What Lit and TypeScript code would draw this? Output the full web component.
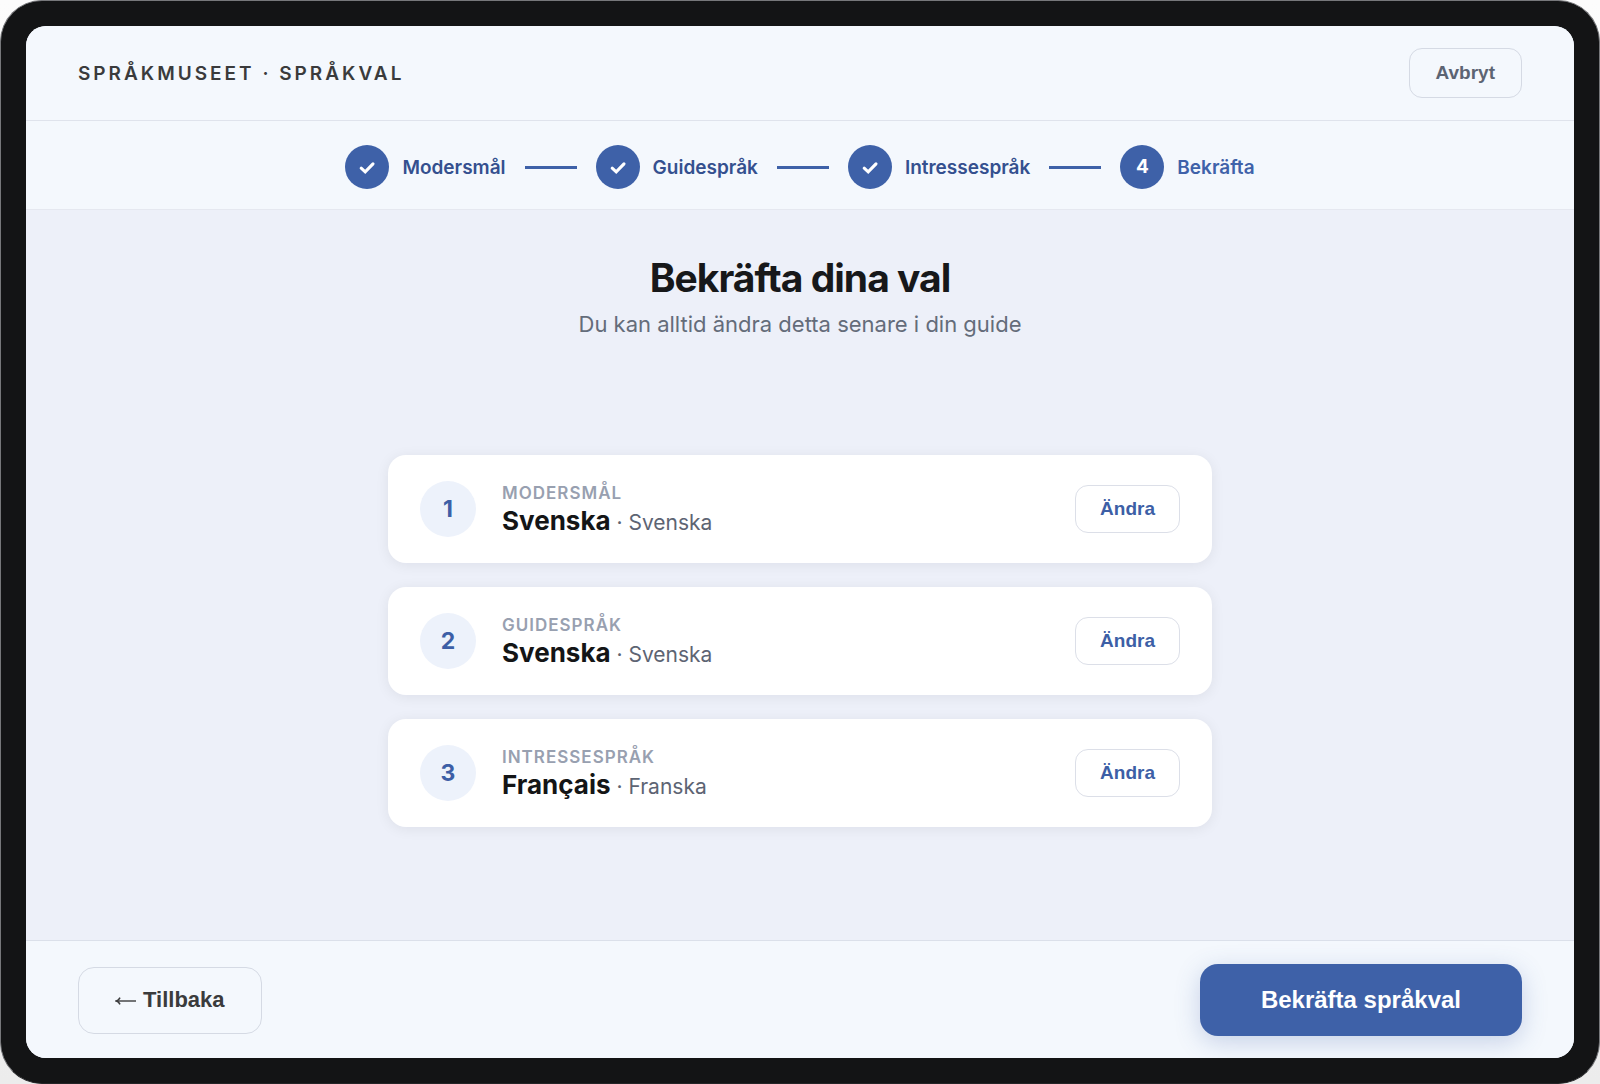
import { LitElement, html, css } from "lit";
import { customElement, property, state } from "lit/decorators.js";

interface Choice {
  label: string;
  native: string;
  swedish: string;
}

@customElement("step-indicator")
export class StepIndicator extends LitElement {
  @property({ attribute: false }) steps: string[] = [];
  @property({ type: Number }) current = 0;

  static styles = css`
    :host {
      display: block;
    }
    .steps {
      display: flex;
      justify-content: center;
      align-items: center;
      margin: 0;
      padding: 0;
      list-style: none;
    }
    .step {
      display: flex;
      align-items: center;
      gap: 13px;
      font-size: 19px;
      line-height: 24px;
      font-weight: 600;
      color: #34508f;
    }
    .step.current {
      color: #3f62a9;
    }
    .step + .step::before {
      content: "";
      width: 52px;
      height: 3px;
      margin: 0 6px;
      background: #3e61a8;
    }
    .step + .step {
      margin-left: 13px;
    }
    .dot {
      display: grid;
      place-items: center;
      width: 44px;
      height: 44px;
      border-radius: 50%;
      background: #3e61a8;
      color: #fff;
      font-weight: 700;
    }
    .name {
      padding-top: 2px;
    }
    .check {
      display: block;
      width: 18px;
      height: 18px;
    }
  `;

  render() {
    return html`<ol class="steps">
      ${this.steps.map(
        (name, i) => html`<li class="step ${i === this.current ? "current" : ""}">
          <span class="dot">
            ${i < this.current
              ? html`<svg class="check" viewBox="0 0 18 18" fill="none" aria-hidden="true">
                  <path d="M3.2 10.2 7.2 13.8 15 5.8" stroke="#fff" stroke-width="3.1"
                    stroke-linecap="round" stroke-linejoin="miter" />
                </svg>`
              : i + 1}
          </span>
          <span class="name">${name}</span>
        </li>`,
      )}
    </ol>`;
  }
}

@customElement("choice-card")
export class ChoiceCard extends LitElement {
  @property({ type: Number }) number = 1;
  @property({ attribute: false }) choice!: Choice;

  static styles = css`
    :host {
      display: block;
    }
    .card {
      display: flex;
      align-items: center;
      gap: 26px;
      padding: 26px 32px;
      border-radius: 18px;
      background: #fff;
      box-shadow: 0 2px 14px rgba(20, 20, 30, 0.07);
    }
    .number {
      display: grid;
      place-items: center;
      flex: none;
      width: 56px;
      height: 56px;
      border-radius: 50%;
      background: #edf2fb;
      color: #3d5fa6;
      font-size: 23px;
      line-height: 28px;
      font-weight: 700;
    }
    .text {
      flex: 1;
      min-width: 0;
    }
    .label {
      margin: 0;
      font-size: 17px;
      line-height: 24px;
      font-weight: 600;
      letter-spacing: 1px;
      text-transform: uppercase;
      color: #98a0b0;
    }
    .value {
      margin: 0;
      font-size: 26px;
      line-height: 32px;
      font-weight: 700;
      color: #141516;
    }
    .translation {
      font-size: 21px;
      line-height: 24px;
      font-weight: 400;
      color: #5d6473;
    }
    .change {
      flex: none;
      height: 48px;
      padding: 0 24px;
      border: 1px solid #dcdfe8;
      border-radius: 13px;
      background: #fff;
      color: #3d5fa6;
      font: 600 19px/24px "Liberation Sans", Arial, sans-serif;
      cursor: pointer;
    }
  `;

  render() {
    const { label, native, swedish } = this.choice;
    return html`<article class="card">
      <span class="number">${this.number}</span>
      <div class="text">
        <p class="label">${label}</p>
        <p class="value">${native}<span class="translation"> · ${swedish}</span></p>
      </div>
      <button class="change" type="button">Ändra</button>
    </article>`;
  }
}

@customElement("app-root")
export class AppRoot extends LitElement {
  @state() private steps = ["Modersmål", "Guidespråk", "Intressespråk", "Bekräfta"];
  @state() private choices: Choice[] = [
    { label: "Modersmål", native: "Svenska", swedish: "Svenska" },
    { label: "Guidespråk", native: "Svenska", swedish: "Svenska" },
    { label: "Intressespråk", native: "Français", swedish: "Franska" },
  ];

  static styles = css`
    :host {
      display: block;
      box-sizing: border-box;
      font-family: Inter, "Liberation Sans", sans-serif;
      background: linear-gradient(#fcfcfc, #ececec);
    }
    .device {
      box-sizing: border-box;
      display: flex;
      min-height: 100vh;
      padding: 25px;
      border: 1px solid #76777a;
      border-bottom-color: #242527;
      border-radius: 42px;
      background: #131415;
    }
    .screen {
      flex: 1;
      display: flex;
      flex-direction: column;
      overflow: hidden;
      border-radius: 20px;
      background: #edf0f9;
    }
    .topbar,
    .footer {
      display: flex;
      justify-content: space-between;
      align-items: center;
      background: #f4f8fd;
    }
    .topbar {
      padding: 22px 52px;
      border-bottom: 1px solid #dfe3ec;
    }
    .brand {
      padding-top: 2px;
      font-size: 19px;
      line-height: 24px;
      font-weight: 600;
      letter-spacing: 3px;
      text-transform: uppercase;
      color: #3a3b3c;
    }
    .progress {
      padding: 24px 52px 20px;
      border-bottom: 1px solid #e5e8f0;
      background: #f4f8fd;
    }
    .content {
      flex: 1;
      display: flex;
      flex-direction: column;
      padding: 44px 52px 0;
    }
    .intro {
      text-align: center;
    }
    .title {
      margin: 0;
      font-size: 39px;
      line-height: 48px;
      font-weight: 700;
      letter-spacing: -1px;
      color: #17181a;
    }
    .subtitle {
      margin: 8px 0 0;
      font-size: 22px;
      line-height: 28px;
      color: #646c7a;
    }
    .choices {
      flex: 1;
      display: flex;
      flex-direction: column;
      justify-content: center;
      gap: 24px;
      width: 100%;
      max-width: 824px;
      margin: 4px auto 0;
    }
    .footer {
      padding: 23px 52px 22px;
      border-top: 1px solid #dbe0ea;
    }
    .button {
      border: 1px solid #d5dae4;
      background: transparent;
      font-family: "Liberation Sans", Arial, sans-serif;
      font-weight: 600;
      cursor: pointer;
    }
    .cancel {
      height: 50px;
      padding: 0 26px;
      border-radius: 13px;
      font-size: 19px;
      color: #5c6473;
    }
    .back {
      display: flex;
      align-items: center;
      gap: 6px;
      height: 67px;
      padding: 0 36px;
      border-radius: 16px;
      font-size: 22px;
      color: #3a3b3c;
    }
    .arrow {
      width: 22px;
      height: 12px;
      margin-top: 2px;
    }
    .confirm {
      height: 72px;
      padding: 0 61px;
      border: 0;
      border-radius: 18px;
      background: #3e61a8;
      box-shadow: 0 6px 24px rgba(62, 97, 168, 0.25);
      font-size: 24px;
      color: #fff;
    }
  `;

  render() {
    return html`<div class="device">
      <div class="screen">
        <header class="topbar">
          <span class="brand">Språkmuseet · Språkval</span>
          <button class="button cancel" type="button">Avbryt</button>
        </header>
        <nav class="progress" aria-label="Steg">
          <step-indicator .steps=${this.steps} .current=${3}></step-indicator>
        </nav>
        <main class="content">
          <div class="intro">
            <h1 class="title">Bekräfta dina val</h1>
            <p class="subtitle">Du kan alltid ändra detta senare i din guide</p>
          </div>
          <section class="choices">
            ${this.choices.map(
              (c, i) => html`<choice-card .number=${i + 1} .choice=${c}></choice-card>`,
            )}
          </section>
        </main>
        <footer class="footer">
          <button class="button back" type="button">
            <svg class="arrow" viewBox="0 0 22 12" fill="none" stroke="currentColor" aria-hidden="true">
              <path d="M1.5 6H21" stroke-width="1.4" />
              <path d="M5 2.6C4.2 4.3 3 5.5 1.4 6c1.6.5 2.8 1.7 3.6 3.4" stroke-width="1.6" />
            </svg>
            Tillbaka
          </button>
          <button class="button confirm" type="button">Bekräfta språkval</button>
        </footer>
      </div>
    </div>`;
  }
}
